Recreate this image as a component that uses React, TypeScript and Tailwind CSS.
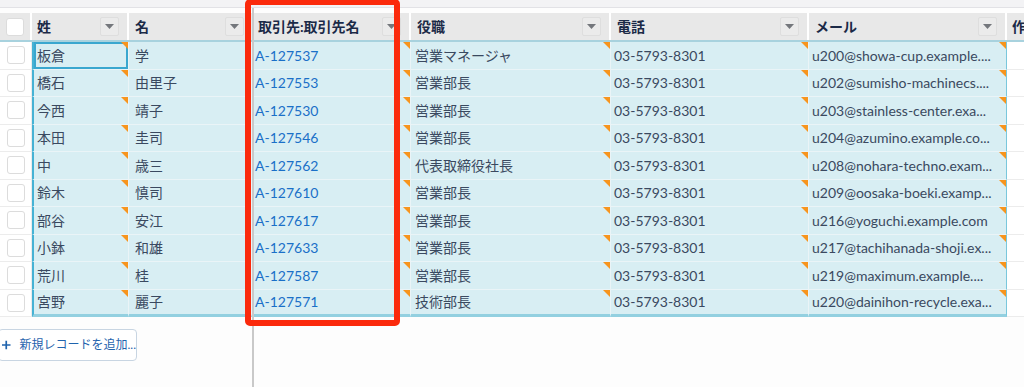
import React from "react";

const rows: string[][] = [
  ["板倉", "学", "A-127537", "営業マネージャ", "u200@showa-cup.example...."],
  ["橋石", "由里子", "A-127553", "営業部長", "u202@sumisho-machinecs...."],
  ["今西", "靖子", "A-127530", "営業部長", "u203@stainless-center.exa..."],
  ["本田", "圭司", "A-127546", "営業部長", "u204@azumino.example.co..."],
  ["中", "歳三", "A-127562", "代表取締役社長", "u208@nohara-techno.exam..."],
  ["鈴木", "慎司", "A-127610", "営業部長", "u209@oosaka-boeki.examp..."],
  ["部谷", "安江", "A-127617", "営業部長", "u216@yoguchi.example.com"],
  ["小鉢", "和雄", "A-127633", "営業部長", "u217@tachihanada-shoji.ex..."],
  ["荒川", "桂", "A-127587", "営業部長", "u219@maximum.example...."],
  ["宮野", "麗子", "A-127571", "技術部長", "u220@dainihon-recycle.exa..."],
];

function Tri() {
  return (
    <span className="absolute top-0 right-0 w-0 h-0 border-t-[7px] border-t-[#f7941d] border-l-[7px] border-l-transparent" />
  );
}

function DropBtn() {
  return (
    <span className="ml-auto mr-[8px] flex h-[19px] w-[19px] shrink-0 items-center justify-center rounded-[2px] border border-[#dedede] bg-[#ebebeb]">
      <svg width="9" height="5" viewBox="0 0 9 5">
        <path d="M0 0 L9 0 L4.5 5 Z" fill="#74777c" />
      </svg>
    </span>
  );
}

function Checkbox() {
  return <span className="block h-[18px] w-[18px] rounded-[3px] border border-[#dcdcdc] bg-white" />;
}

function HeadCell({ label, w, pl = "pl-[6px]", btn = true }: { label: string; w: string; pl?: string; btn?: boolean }) {
  return (
    <div className={`${w} flex h-full shrink-0 items-center overflow-hidden border-r-2 border-white ${pl} font-bold text-[#1b2a47]`}>
      <span className="whitespace-nowrap">{label}</span>
      {btn && <DropBtn />}
    </div>
  );
}

const cellBase =
  "relative flex h-full shrink-0 items-center overflow-hidden whitespace-nowrap bg-[#d8eef3] border-b border-r border-[#eaf4f7] pl-[3px]";

const txt = "text-[#3a4960]";

export default function App() {
  return (
    <div className="relative h-[387px] w-[1024px] overflow-hidden bg-[#fdfdfd] font-['Lato','Noto_Sans_CJK_JP',sans-serif] text-[14px]">
      <div className="flex h-full flex-col">
        <div className="h-[8px] shrink-0 border-b border-[#e2e2e6] bg-[#f3f3f5]" />
        <div className="flex min-h-0 flex-1">
          {/* Left frozen pane */}
          <div className="flex w-[252px] shrink-0 flex-col pt-[5px]">
            <div className="flex h-[29px] shrink-0 border-b-2 border-[#a8d2de] bg-[#e8e8e8]">
              <div className="flex w-[32px] shrink-0 items-center justify-center border-r-2 border-white">
                <Checkbox />
              </div>
              <HeadCell label="姓" w="w-[97px]" pl="pl-[5px]" />
              <div className="flex h-full flex-1 items-center pl-[6px] font-bold text-[#1b2a47]">
                <span>名</span>
                <DropBtn />
              </div>
            </div>
            {rows.map((r, i) => (
              <div key={i} className="flex h-[27.5px] shrink-0">
                <div className="flex h-full w-[32px] shrink-0 items-center justify-center border-b border-r border-[#ececec] bg-white">
                  <Checkbox />
                </div>
                <div
                  className={`${cellBase} ${txt} w-[97px] border-l-2 border-l-[#46b2d4] ${
                    i === 9 ? "border-b-[3px] border-b-[#93d0e0]" : ""
                  } ${i === 0 ? "shadow-[inset_0_0_0_2px_#3aa7cf]" : ""}`}
                >
                  {r[0]}
                  <Tri />
                </div>
                <div className={`${cellBase} ${txt} flex-1 pl-[6px] ${i === 9 ? "border-b-[3px] border-b-[#93d0e0]" : ""}`}>{r[1]}</div>
              </div>
            ))}
            <div className="ml-[-2px] mt-[12px] flex h-[32px] w-[139px] items-center rounded-[4px] border border-[#c8d5e2] bg-white pl-[3px] text-[12px] text-[#1f63ad]">
              <svg width="10" height="10" viewBox="0 0 10 10" className="mr-[9px]">
                <path d="M5 0 V10 M0 5 H10" stroke="#1f63ad" strokeWidth="2" />
              </svg>
              <span className="whitespace-nowrap">新規レコードを追加...</span>
            </div>
          </div>

          {/* Divider */}
          <div className="w-[2px] shrink-0 bg-[#c9c9c9]" />

          {/* Right pane */}
          <div className="flex min-w-0 flex-1 flex-col pt-[5px]">
            <div className="flex h-[29px] shrink-0 border-b-2 border-[#a8d2de] bg-[#e8e8e8]">
              <HeadCell label="取引先:取引先名" w="w-[157px]" pl="pl-[4px]" />
              <HeadCell label="役職" w="w-[200px]" />
              <HeadCell label="電話" w="w-[198px]" />
              <HeadCell label="メール" w="w-[198px]" />
              <HeadCell label="作" w="w-[120px]" pl="pl-[5px]" btn={false} />
            </div>
            {rows.map((r, i) => {
              const last = i === 9 ? "border-b-[3px] border-b-[#93d0e0]" : "";
              return (
                <div key={i} className="flex h-[27.5px] shrink-0">
                  <div className={`${cellBase} w-[157px] !pl-[1px] text-[#1a70c8] ${last}`}>
                    {r[2]}
                    <Tri />
                  </div>
                  <div className={`${cellBase} ${txt} w-[200px] !pl-[4px] ${last}`}>
                    {r[3]}
                    <Tri />
                  </div>
                  <div className={`${cellBase} ${txt} w-[198px] ${last}`}>
                    03-5793-8301
                    <Tri />
                  </div>
                  <div className={`${cellBase} ${txt} w-[198px] border-r-[#79c7dc] ${last}`}>
                    {r[4]}
                    <Tri />
                  </div>
                  <div className="h-full w-[120px] shrink-0 border-b border-[#ececec] bg-white" />
                </div>
              );
            })}
          </div>
        </div>
      </div>

      {/* Red annotation box */}
      <div className="pointer-events-none absolute left-[245px] top-[-1px] h-[327px] w-[155px] rounded-[5px] border-[6px] border-[#fb2a0c]" />
    </div>
  );
}
